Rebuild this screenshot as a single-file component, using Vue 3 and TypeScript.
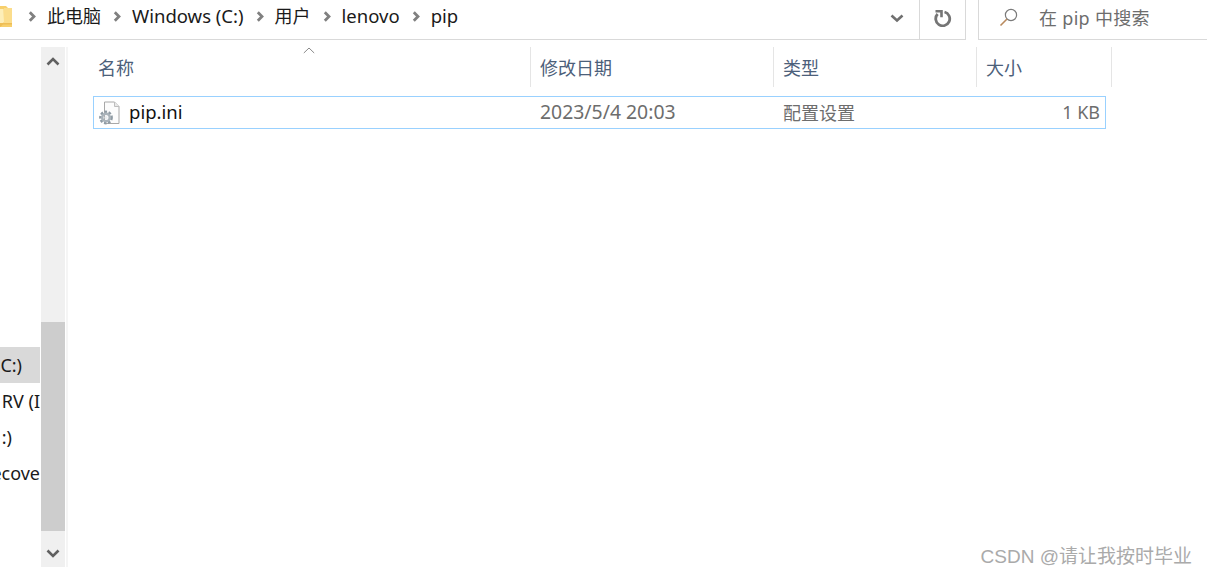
<script setup lang="ts">
interface FileRow {
  name: string
  date: string
  type: string
  size: string
}

const crumbs: string[] = ['此电脑', 'Windows (C:)', '用户', 'lenovo', 'pip']

const isLatin = (s: string) => /^[\x00-\x7f]+$/.test(s)

const columns = [
  { label: '名称', width: 438 },
  { label: '修改日期', width: 243 },
  { label: '类型', width: 203 },
  { label: '大小', width: 135 },
]

const files: FileRow[] = [{ name: 'pip.ini', date: '2023/5/4 20:03', type: '配置设置', size: '1 KB' }]

const drives = [
  { label: 'C:)', active: true },
  { label: 'RV (I', active: false },
  { label: ':)', active: false },
  { label: 'ecove', active: false },
]
</script>

<template>
  <div class="window">
    <div class="toolbar">
      <div class="address">
        <div class="path">
          <svg class="folder" width="12" height="22" viewBox="0 0 12 22">
            <path d="M0 1h6l2 2h4v19H0z" fill="#f7cf6c" />
            <path d="M4 3h8v16H4z" fill="#fbdd8c" />
            <path d="M0 4h3.5l.5 13-4 4z" fill="#fdeeb8" />
            <path d="M0 18h12v1.5H3L0 22z" fill="#eebd55" />
          </svg>
          <template v-for="c in crumbs" :key="c">
            <svg class="chev" width="8" height="11" viewBox="0 0 8 11">
              <path d="M1.8 1.2 6 5.5 1.8 9.8" fill="none" stroke="#808080" stroke-width="2.8" />
            </svg>
            <span class="crumb" :class="{ latin: isLatin(c) }">{{ c }}</span>
          </template>
        </div>
        <div class="address-end">
          <div class="drop">
            <svg width="14" height="9" viewBox="0 0 14 9">
              <path d="M1.5 1.5 7 6.5l5.5-5" fill="none" stroke="#6f6f6f" stroke-width="2.6" />
            </svg>
          </div>
          <div class="refresh">
            <svg width="18" height="18" viewBox="0 0 18 18">
              <path d="M10.5 3A7 7 0 1 1 3.6 5" fill="none" stroke="#757575" stroke-width="2.8" />
              <path d="M1.5 2.300h6v6" fill="none" stroke="#757575" stroke-width="2.600" />
            </svg>
          </div>
        </div>
      </div>
      <div class="search">
        <svg width="20" height="20" viewBox="0 0 20 20">
          <circle cx="12" cy="8" r="5.600" fill="none" stroke="#7a7a7a" stroke-width="1.200" />
          <path d="M8 12 1.500 18.500" stroke="#b98a5e" stroke-width="1.600" />
        </svg>
        <span>在 pip 中搜索</span>
      </div>
    </div>

    <div class="body">
      <div class="nav">
        <div v-for="d in drives" :key="d.label" class="nav-item" :class="{ active: d.active }">
          <span>{{ d.label }}</span>
        </div>
      </div>
      <div class="scrollbar">
        <div class="arrow up">
          <svg width="14" height="9" viewBox="0 0 14 9">
            <path d="M1.500 7.500 7 2l5.500 5.500" fill="none" stroke="#606060" stroke-width="2.600" />
          </svg>
        </div>
        <div class="track"><div class="thumb"></div></div>
        <div class="arrow down">
          <svg width="14" height="9" viewBox="0 0 14 9">
            <path d="M1.500 1.500 7 7l5.500-5.500" fill="none" stroke="#606060" stroke-width="2.600" />
          </svg>
        </div>
      </div>
      <div class="splitter"></div>

      <div class="list">
        <div class="head">
          <div v-for="col in columns" :key="col.label" class="head-cell" :style="{ width: col.width + 'px' }">
            {{ col.label }}
          </div>
          <svg class="sort" width="12" height="7" viewBox="0 0 12 7">
            <path d="M.8 6 6 1l5.200 5" fill="none" stroke="#8a8a8a" stroke-width="1" />
          </svg>
        </div>
        <div v-for="f in files" :key="f.name" class="row">
          <div class="cell name">
            <svg class="file-icon" width="24" height="26" viewBox="0 0 24 26">
              <path d="M7.500 3h10l4.500 4.500v17h-14.500z" fill="#fcfcfc" stroke="#a8a8a8" />
              <path d="M17.500 3v4.500H22" fill="#e8e8e8" stroke="#bdbdbd" />
              <circle cx="9" cy="18.500" r="5.400" fill="none" stroke="#8f9ba4" stroke-width="3" stroke-dasharray="2.400 1.500" />
              <circle cx="9" cy="18.500" r="3.800" fill="none" stroke="#aab3ba" stroke-width="2.600" />
              <circle cx="9" cy="18.500" r="1.500" fill="#e9ecef" />
            </svg>
            <span>{{ f.name }}</span>
          </div>
          <div class="cell date">{{ f.date }}</div>
          <div class="cell type">{{ f.type }}</div>
          <div class="cell size">{{ f.size }}</div>
        </div>
      </div>
    </div>

    <div class="watermark">CSDN @请让我按时毕业</div>
  </div>
</template>

<style>
html,
body {
  margin: 0;
  background: #fff;
  overflow: hidden;
}
</style>

<style scoped>
.window {
  position: relative;
  width: 1207px;
  height: 575px;
  overflow: hidden;
  background: #fff;
  font-family: 'Noto Sans', 'Open Sans', 'Noto Sans CJK SC', sans-serif;
  font-size: 18px;
  color: #1a1a1a;
}

.toolbar {
  display: flex;
  height: 40px;
  box-sizing: border-box;
}

.address {
  display: flex;
  align-items: center;
  width: 966px;
  height: 40px;
  box-sizing: border-box;
  border-bottom: 1px solid #d9d9d9;
  border-right: 1px solid #d9d9d9;
}

.path {
  display: flex;
  align-items: center;
  padding-bottom: 7px;
}

.folder {
  flex: none;
  margin-right: 16px;
}

.chev {
  flex: none;
  margin-right: 11px;
}

.crumb {
  margin-right: 12px;
  white-space: nowrap;
  line-height: 34px;
}

.crumb.latin {
  font-size: 18.5px;
}

.address-end {
  display: flex;
  height: 100%;
  margin-left: auto;
}

.drop {
  display: flex;
  align-items: center;
  justify-content: center;
  width: 46px;
  padding-bottom: 3px;
  border-right: 1px solid #d9d9d9;
  box-sizing: border-box;
}

.refresh {
  display: flex;
  align-items: center;
  justify-content: center;
  width: 45px;
  padding-bottom: 3px;
  box-sizing: border-box;
}

.search {
  display: flex;
  align-items: center;
  gap: 20px;
  margin-left: 12px;
  flex: 1;
  height: 40px;
  box-sizing: border-box;
  padding-left: 20px;
  padding-bottom: 6px;
  border-left: 1px solid #d9d9d9;
  border-bottom: 1px solid #d9d9d9;
  color: #6d6d6d;
  letter-spacing: 0.3px;
}

.body {
  display: flex;
  height: 527px;
  margin-top: 7px;
}

.nav {
  width: 41px;
  flex: none;
  box-sizing: border-box;
  padding-top: 300px;
  overflow: hidden;
}

.nav-item {
  display: flex;
  align-items: center;
  justify-content: flex-end;
  width: 40px;
  height: 36px;
  white-space: nowrap;
  overflow: hidden;
}

.nav-item.active {
  background: #d9d9d9;
}

.nav-item:nth-child(1) span {
  margin-right: 18px;
}
.nav-item:nth-child(3) span {
  margin-right: 28px;
}

.scrollbar {
  display: flex;
  flex-direction: column;
  width: 24px;
  height: 520px;
  flex: none;
  background: #f0f0f0;
}

.arrow {
  display: flex;
  align-items: center;
  justify-content: center;
  height: 36px;
  flex: none;
  box-sizing: border-box;
}

.arrow.up {
  padding-bottom: 7px;
}

.arrow.down {
  padding-top: 9px;
}

.track {
  flex: 1;
  display: flex;
  flex-direction: column;
  justify-content: flex-end;
}

.thumb {
  height: 209px;
  background: #cdcdcd;
}

.splitter {
  width: 2px;
  height: 520px;
  margin-left: 1px;
  background: #f5f5f5;
  flex: none;
}

.list {
  flex: 1;
  padding-left: 25px;
}

.head {
  position: relative;
  display: flex;
  height: 40px;
  margin-bottom: 9px;
}

.head-cell {
  box-sizing: border-box;
  flex: none;
  padding-left: 9px;
  line-height: 42px;
  color: #4c607a;
  border-right: 1px solid #e5e5e5;
}

.head-cell:first-child {
  padding-left: 5px;
}

.sort {
  position: absolute;
  left: 210px;
  top: 0;
}

.row {
  display: flex;
  align-items: center;
  width: 1013px;
  height: 33px;
  box-sizing: border-box;
  border: 1px solid #99d1ff;
  padding-bottom: 2px;
}

.cell {
  white-space: nowrap;
  box-sizing: border-box;
  flex: none;
  color: #6d6d6d;
}

.name {
  display: flex;
  align-items: center;
  gap: 8px;
  width: 446px;
  padding-left: 3px;
  color: #111;
  font-size: 18.5px;
}

.file-icon {
  flex: none;
}

.date {
  width: 243px;
  font-size: 19.4px;
}

.type {
  width: 203px;
}

.size {
  width: 119px;
  padding-right: 5px;
  text-align: right;
}

.watermark {
  position: absolute;
  right: 15px;
  bottom: 5px;
  font-size: 19px;
  line-height: 26px;
  color: #aaaaaa;
  white-space: nowrap;
  font-family: 'Liberation Sans', 'Noto Sans CJK SC', sans-serif;
}
</style>
